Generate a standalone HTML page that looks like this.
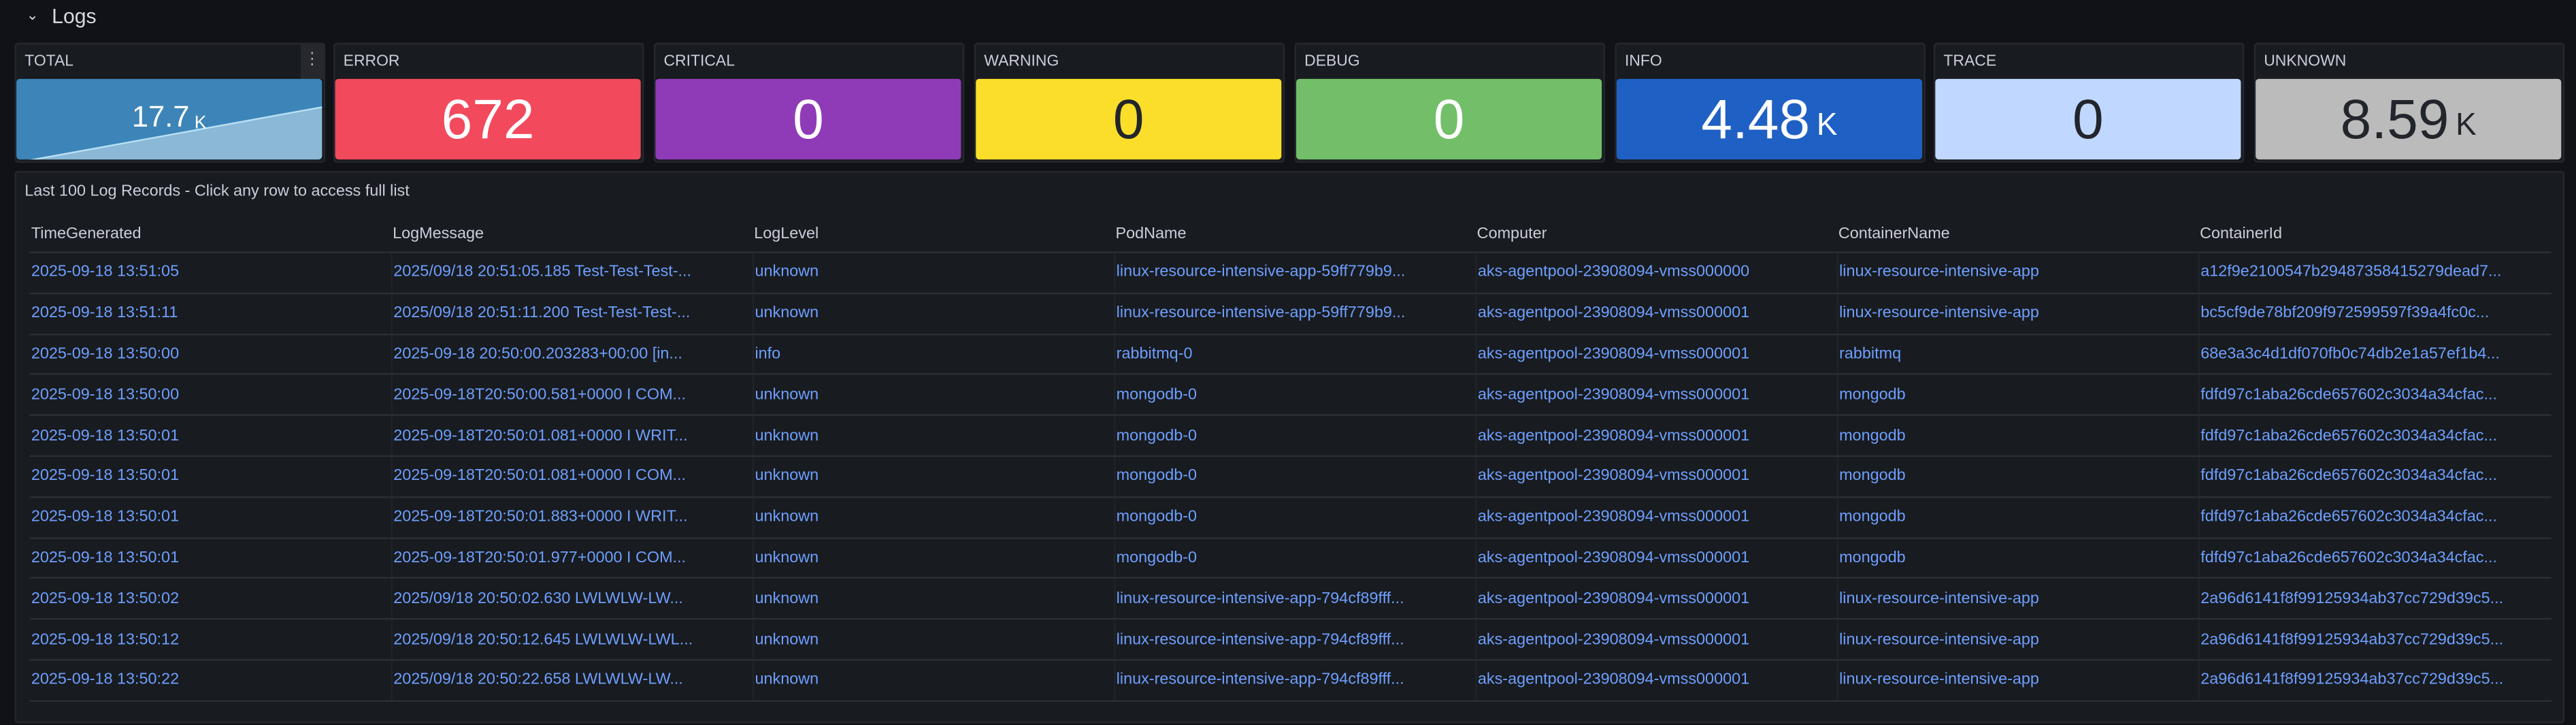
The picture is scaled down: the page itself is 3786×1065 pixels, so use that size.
<!DOCTYPE html>
<html><head><meta charset="utf-8"><style>
html,body{margin:0;padding:0;background:#111217;width:3786px;height:1065px;overflow:hidden;}
#w{width:1568px;height:441px;transform:scale(2.41454);transform-origin:0 0;position:relative;font-family:"Liberation Sans",sans-serif;color:#ccccdc;}
.hdr{position:absolute;left:16px;top:3px;font-size:12.5px;color:#d8d9e0;}
.hdr span{font-size:9px;margin-right:8px;position:relative;top:-2px}
.p{position:absolute;top:26px;width:189px;height:73px;background:#181b1f;border:1px solid #24272d;border-radius:2px;box-sizing:border-box;}
.p .t{position:absolute;left:5px;top:5px;font-size:9.5px;color:#ccccdc;}
.p .v{position:absolute;left:0;right:1px;top:21px;bottom:1px;border-radius:2px;display:flex;align-items:center;justify-content:center;font-size:34px;line-height:1;overflow:hidden}
.v small{font-size:19px;margin-left:4px;position:relative;top:4px}
.tb{position:absolute;left:9px;top:104px;width:1552px;height:336px;background:#181b1f;border:1px solid #24272d;border-radius:2px;box-sizing:border-box;}
.tb .ti{position:absolute;left:5px;top:6px;font-size:9.7px;color:#ccccdc;}
table{position:absolute;left:8px;top:26px;width:1535px;border-collapse:collapse;font-size:9.7px;table-layout:fixed}
th{text-align:left;font-weight:normal;color:#ccccdc;height:22px;padding:0 0 0 1px;border-bottom:1px solid #2c2f35;vertical-align:middle}
td{height:23.8px;padding:0 0 0 1px;color:#6e9fff;border-bottom:1px solid #2c2f35;border-left:1px solid #202328;white-space:nowrap;overflow:hidden}
td:first-child{border-left:none}
</style></head><body><div id="w">
<div class="hdr"><span>&#8964;</span>Logs</div>

<div class="p" style="left:9px"><div class="t">TOTAL</div>
<div style="position:absolute;right:0;top:0;width:14px;height:21px;background:#26282e;color:#aaa;font-size:10px;text-align:center;line-height:20px">&#8942;</div>
<div class="v" style="background:#3d85b8;color:#fff;font-size:18px"><svg style="position:absolute;left:0;top:0" width="187" height="51" viewBox="0 0 187 51" preserveAspectRatio="none"><polygon points="0,51 187,17 187,51" fill="#8ab8d6"/><polyline points="0,51 187,17" stroke="#b8e0f5" stroke-width="1" fill="none"/></svg><span style="position:relative;top:-2px">17.7<small style="font-size:11px;margin-left:3px;top:1px">K</small></span></div></div>

<div class="p" style="left:203px"><div class="t">ERROR</div><div class="v" style="background:#f2495c;color:#fff">672</div></div>
<div class="p" style="left:398px"><div class="t">CRITICAL</div><div class="v" style="background:#8f3bb8;color:#fff">0</div></div>
<div class="p" style="left:593px"><div class="t">WARNING</div><div class="v" style="background:#fade2a;color:#22252b">0</div></div>
<div class="p" style="left:788px"><div class="t">DEBUG</div><div class="v" style="background:#73bf69;color:#fff">0</div></div>
<div class="p" style="left:983px"><div class="t">INFO</div><div class="v" style="background:#1f60c4;color:#fff">4.48<small>K</small></div></div>
<div class="p" style="left:1177px"><div class="t">TRACE</div><div class="v" style="background:#c0d8ff;color:#22252b">0</div></div>
<div class="p" style="left:1372px"><div class="t">UNKNOWN</div><div class="v" style="background:#bbbbbb;color:#22252b">8.59<small>K</small></div></div>

<div class="tb"><div class="ti">Last 100 Log Records - Click any row to access full list</div>
<table>
<colgroup><col style="width:220px"><col style="width:220px"><col style="width:220px"><col style="width:220px"><col style="width:220px"><col style="width:220px"><col></colgroup>
<tr><th>TimeGenerated</th><th>LogMessage</th><th>LogLevel</th><th>PodName</th><th>Computer</th><th>ContainerName</th><th>ContainerId</th></tr>
<tr><td>2025-09-18 13:51:05</td><td>2025/09/18 20:51:05.185 Test-Test-Test-...</td><td>unknown</td><td>linux-resource-intensive-app-59ff779b9...</td><td>aks-agentpool-23908094-vmss000000</td><td>linux-resource-intensive-app</td><td>a12f9e2100547b29487358415279dead7...</td></tr>
<tr><td>2025-09-18 13:51:11</td><td>2025/09/18 20:51:11.200 Test-Test-Test-...</td><td>unknown</td><td>linux-resource-intensive-app-59ff779b9...</td><td>aks-agentpool-23908094-vmss000001</td><td>linux-resource-intensive-app</td><td>bc5cf9de78bf209f972599597f39a4fc0c...</td></tr>
<tr><td>2025-09-18 13:50:00</td><td>2025-09-18 20:50:00.203283+00:00 [in...</td><td>info</td><td>rabbitmq-0</td><td>aks-agentpool-23908094-vmss000001</td><td>rabbitmq</td><td>68e3a3c4d1df070fb0c74db2e1a57ef1b4...</td></tr>
<tr><td>2025-09-18 13:50:00</td><td>2025-09-18T20:50:00.581+0000 I COM...</td><td>unknown</td><td>mongodb-0</td><td>aks-agentpool-23908094-vmss000001</td><td>mongodb</td><td>fdfd97c1aba26cde657602c3034a34cfac...</td></tr>
<tr><td>2025-09-18 13:50:01</td><td>2025-09-18T20:50:01.081+0000 I WRIT...</td><td>unknown</td><td>mongodb-0</td><td>aks-agentpool-23908094-vmss000001</td><td>mongodb</td><td>fdfd97c1aba26cde657602c3034a34cfac...</td></tr>
<tr><td>2025-09-18 13:50:01</td><td>2025-09-18T20:50:01.081+0000 I COM...</td><td>unknown</td><td>mongodb-0</td><td>aks-agentpool-23908094-vmss000001</td><td>mongodb</td><td>fdfd97c1aba26cde657602c3034a34cfac...</td></tr>
<tr><td>2025-09-18 13:50:01</td><td>2025-09-18T20:50:01.883+0000 I WRIT...</td><td>unknown</td><td>mongodb-0</td><td>aks-agentpool-23908094-vmss000001</td><td>mongodb</td><td>fdfd97c1aba26cde657602c3034a34cfac...</td></tr>
<tr><td>2025-09-18 13:50:01</td><td>2025-09-18T20:50:01.977+0000 I COM...</td><td>unknown</td><td>mongodb-0</td><td>aks-agentpool-23908094-vmss000001</td><td>mongodb</td><td>fdfd97c1aba26cde657602c3034a34cfac...</td></tr>
<tr><td>2025-09-18 13:50:02</td><td>2025/09/18 20:50:02.630 LWLWLW-LW...</td><td>unknown</td><td>linux-resource-intensive-app-794cf89fff...</td><td>aks-agentpool-23908094-vmss000001</td><td>linux-resource-intensive-app</td><td>2a96d6141f8f99125934ab37cc729d39c5...</td></tr>
<tr><td>2025-09-18 13:50:12</td><td>2025/09/18 20:50:12.645 LWLWLW-LWL...</td><td>unknown</td><td>linux-resource-intensive-app-794cf89fff...</td><td>aks-agentpool-23908094-vmss000001</td><td>linux-resource-intensive-app</td><td>2a96d6141f8f99125934ab37cc729d39c5...</td></tr>
<tr><td>2025-09-18 13:50:22</td><td>2025/09/18 20:50:22.658 LWLWLW-LW...</td><td>unknown</td><td>linux-resource-intensive-app-794cf89fff...</td><td>aks-agentpool-23908094-vmss000001</td><td>linux-resource-intensive-app</td><td>2a96d6141f8f99125934ab37cc729d39c5...</td></tr>
</table></div>
</div></body></html>
